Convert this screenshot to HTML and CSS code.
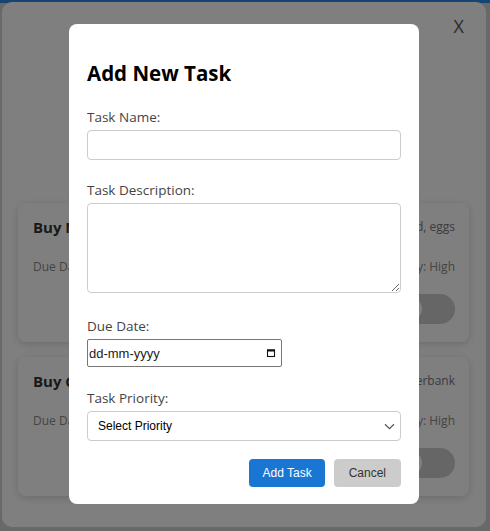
FILE: index.html
```html
<!DOCTYPE html>
<html lang="en">
<head>
<meta charset="utf-8">
<title>Task Manager</title>
<link rel="stylesheet" href="styles.css">
</head>
<body>
<div class="app">
  <div class="app-header">
    <button class="app-close" type="button" aria-label="Close">X</button>
  </div>
  <div class="task-list">
    <div class="card">
      <div class="card-row">
        <h3 class="card-title">Buy Milk</h3>
        <span class="card-desc">Milk, bread, eggs</span>
      </div>
      <div class="card-row card-meta">
        <span>Due Date: 2024-06-10</span>
        <span>Priority: High</span>
      </div>
      <div class="card-row card-actions">
        <span class="toggle"><span class="knob"></span></span>
      </div>
    </div>
    <div class="card">
      <div class="card-row">
        <h3 class="card-title">Buy Charger</h3>
        <span class="card-desc">Phone charger, powerbank</span>
      </div>
      <div class="card-row card-meta">
        <span>Due Date: 2024-06-12</span>
        <span>Priority: High</span>
      </div>
      <div class="card-row card-actions">
        <span class="toggle"><span class="knob"></span></span>
      </div>
    </div>
  </div>
</div>

<div class="overlay">
  <form class="modal">
    <h2 class="modal-title">Add New Task</h2>
    <div class="field field-name">
      <label class="field-label" for="task-name">Task Name:</label>
      <input class="text-input" id="task-name" type="text">
    </div>
    <div class="field field-desc">
      <label class="field-label" for="task-desc">Task Description:</label>
      <textarea class="text-area" id="task-desc"></textarea>
    </div>
    <div class="field field-date">
      <label class="field-label">Due Date:</label>
      <div class="date-input">
        <span class="date-text">dd-mm-yyyy</span>
        <svg class="date-icon" width="10" height="10" viewBox="0 0 10 10" aria-hidden="true">
          <rect x="1.5" y="2" width="7" height="6.5" fill="none" stroke="#111" stroke-width="1.1"/>
          <rect x="1" y="1.5" width="8" height="2" fill="#111"/>
        </svg>
      </div>
    </div>
    <div class="field field-priority">
      <label class="field-label" for="task-priority">Task Priority:</label>
      <div class="select-wrap">
        <select class="select-input" id="task-priority">
          <option>Select Priority</option>
          <option>High</option>
          <option>Medium</option>
          <option>Low</option>
        </select>
        <svg class="select-arrow" width="11" height="7" viewBox="0 0 11 7" aria-hidden="true">
          <path d="M1 1.2 L5.5 5.6 L10 1.2" fill="none" stroke="#555" stroke-width="1.2"/>
        </svg>
      </div>
    </div>
    <div class="actions">
      <button class="btn btn-primary" type="button">Add Task</button>
      <button class="btn btn-secondary" type="button">Cancel</button>
    </div>
  </form>
</div>
</body>
</html>
```
FILE: styles.css
```css
* { box-sizing: border-box; }

html, body { height: 100%; }

body {
  margin: 0;
  padding: 2px 4px 4px 2px;
  background: linear-gradient(#2f8ae6 0 3px, #d2d2d2 3px);
  font-family: "Open Sans", "Noto Sans", sans-serif;
}

.app {
  height: 100%;
  background: #fff;
  border-radius: 10px;
  display: flex;
  flex-direction: column;
}

.app-header {
  display: flex;
  justify-content: flex-end;
  padding: 13px 22px 0;
}

.app-close {
  background: none;
  border: 0;
  padding: 0;
  font: 400 18px/22px "Open Sans", sans-serif;
  color: #555;
}

.task-list {
  display: flex;
  flex-direction: column;
  gap: 15px;
  padding: 166px 17px 0 16px;
}

.card {
  background: #fff;
  border-radius: 8px;
  box-shadow: 0 2px 8px rgba(0, 0, 0, 0.16);
  padding: 15px 14px 18px 15px;
  display: flex;
  flex-direction: column;
}

.card-row {
  display: flex;
  justify-content: space-between;
  align-items: center;
}

.card-title {
  margin: 0;
  font-size: 15px;
  line-height: 18px;
  font-weight: 700;
  color: #333;
}

.card-desc {
  font-size: 12px;
  line-height: 18px;
  color: #777;
}

.card-meta {
  margin-top: 22px;
  font-size: 12px;
  line-height: 18px;
  color: #888;
}

.card-actions {
  margin-top: 18px;
  justify-content: flex-end;
}

.toggle {
  width: 60px;
  height: 30px;
  border-radius: 15px;
  background: #ccc;
  display: flex;
  align-items: center;
  padding: 3px;
}

.knob {
  width: 24px;
  height: 24px;
  border-radius: 50%;
  background: #fff;
}

.overlay {
  position: fixed;
  inset: 0;
  padding: 0 4px 3px 2px;
  background: rgba(0, 0, 0, 0.5);
  display: flex;
  align-items: center;
  justify-content: center;
}

.modal {
  width: 350px;
  background: #fff;
  border-radius: 8px;
  padding: 18px 18px 17px;
}

.modal-title {
  margin: 16px 0 19px;
  font-size: 20.5px;
  line-height: 30px;
  font-weight: 700;
  color: #000;
}

.field-label {
  display: block;
  font-size: 13.5px;
  line-height: 20px;
  color: #444;
  margin-bottom: 3px;
}

.field-name { margin-bottom: 20px; }
.field-desc { margin-bottom: 23px; }
.field-date { margin-bottom: 21px; }
.field-priority { margin-bottom: 18px; }

.text-input,
.text-area,
.select-input {
  display: block;
  width: 100%;
  border: 1px solid #ccc;
  border-radius: 4px;
  background: #fff;
  font: 12px "Liberation Sans", Arial, sans-serif;
  color: #000;
}

.text-input {
  height: 30px;
  padding: 0 8px;
}

.text-area {
  height: 90px;
  padding: 6px 8px;
  resize: vertical;
}

.select-wrap {
  position: relative;
}

.select-input {
  height: 30px;
  padding: 0 30px 0 10px;
  appearance: none;
  -webkit-appearance: none;
}

.select-arrow {
  position: absolute;
  right: 6px;
  top: 12px;
  pointer-events: none;
}

.date-input {
  width: 195px;
  height: 28px;
  border: 1px solid #767676;
  border-radius: 2px;
  display: flex;
  align-items: center;
  justify-content: space-between;
  padding: 0 5px 0 1px;
  font: 13px "Liberation Sans", Arial, sans-serif;
  color: #222;
}

.date-icon { display: block; }

.actions {
  display: flex;
  justify-content: flex-end;
  gap: 9px;
}

.btn {
  height: 28px;
  border: 0;
  border-radius: 4px;
  font: 12px "Liberation Sans", Arial, sans-serif;
}

.btn-primary {
  background: #1976d2;
  color: #fff;
  padding: 0 13px;
}

.btn-secondary {
  background: #ccc;
  color: #333;
  padding: 0 15px;
}
```
